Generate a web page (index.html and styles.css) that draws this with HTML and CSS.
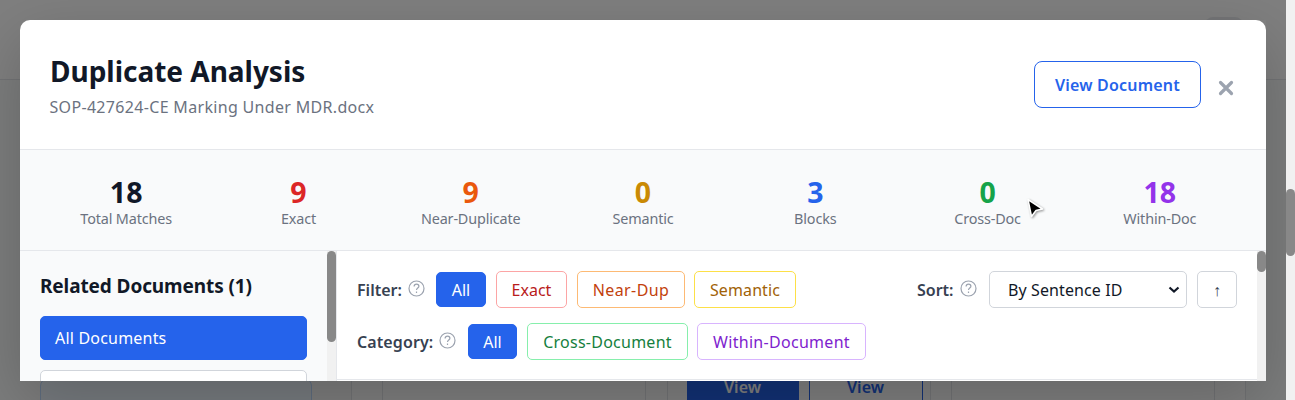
FILE: index.html
```html
<!DOCTYPE html>
<html lang="en">
<head>
<meta charset="utf-8">
<title>Duplicate Analysis</title>
<link rel="stylesheet" href="styles.css">
</head>
<body>
<div class="page">
  <div class="topbar"><span class="topbar-chip"></span></div>
  <div class="cards">
    <div class="side-panel"><div class="side-item"></div></div>
    <div class="grid-panel">
      <div class="card"></div>
      <div class="card card-actions"><span class="act solid">View</span><span class="act outline">View</span></div>
      <div class="card"></div>
    </div>
  </div>
</div>
<div class="overlay"></div>
<div class="page-scroll"><div class="thumb"></div></div>

<div class="modal">
  <header class="head">
    <div>
      <h1 class="title">Duplicate Analysis</h1>
      <div class="file">SOP-427624-CE Marking Under MDR.docx</div>
    </div>
    <div class="head-actions">
      <button class="view-doc"><span>View Document</span></button>
      <svg class="close" viewBox="0 0 16 16"><path d="M2.500 2.500L13.500 13.500M13.500 2.500L2.500 13.500"/></svg>
    </div>
  </header>
  <section class="stats">
    <div class="stat"><b class="c-dark">18</b><span>Total Matches</span></div>
    <div class="stat"><b class="c-red">9</b><span>Exact</span></div>
    <div class="stat"><b class="c-orange">9</b><span>Near-Duplicate</span></div>
    <div class="stat"><b class="c-yellow">0</b><span>Semantic</span></div>
    <div class="stat"><b class="c-blue">3</b><span>Blocks</span></div>
    <div class="stat"><b class="c-green">0</b><span>Cross-Doc</span></div>
    <div class="stat"><b class="c-purple">18</b><span>Within-Doc</span></div>
  </section>
  <div class="body">
    <aside class="sidebar">
      <h2 class="side-title">Related Documents (1)</h2>
      <div class="doc active">All Documents</div>
      <div class="doc"></div>
    </aside>
    <div class="scroll"><div class="thumb side-thumb"></div></div>
    <main class="main">
      <div class="row filter-row">
        <span class="label l-filter">Filter:</span>
        <svg class="help" viewBox="0 0 17 17"><circle cx="8.500" cy="8.500" r="7.500"/><path d="M6.100 6.500C6.200 5 7.200 4.200 8.500 4.200S10.900 5 10.900 6.300C10.900 8.100 8.500 8.100 8.500 10.100M8.500 11.600V12.900"/></svg>
        <button class="chip on f-all">All</button>
        <button class="chip red f-exact">Exact</button>
        <button class="chip orange f-near">Near-Dup</button>
        <button class="chip yellow f-sem">Semantic</button>
        <div class="sort">
          <span class="label l-sort">Sort:</span>
          <svg class="help" viewBox="0 0 17 17"><circle cx="8.500" cy="8.500" r="7.500"/><path d="M6.100 6.500C6.200 5 7.200 4.200 8.500 4.200S10.900 5 10.900 6.300C10.900 8.100 8.500 8.100 8.500 10.100M8.500 11.600V12.900"/></svg>
          <div class="select"><span>By Sentence ID</span><svg class="chev" viewBox="0 0 12 8"><path d="M1.500 1.500L6 5.500L10.500 1.500"/></svg></div>
          <button class="dir"><span>↑</span></button>
        </div>
      </div>
      <div class="row cat-row">
        <span class="label l-cat">Category:</span>
        <svg class="help" viewBox="0 0 17 17"><circle cx="8.500" cy="8.500" r="7.500"/><path d="M6.100 6.500C6.200 5 7.200 4.200 8.500 4.200S10.900 5 10.900 6.300C10.900 8.100 8.500 8.100 8.500 10.100M8.500 11.600V12.900"/></svg>
        <button class="chip on c-all">All</button>
        <button class="chip green c-cross">Cross-Document</button>
        <button class="chip purple c-within">Within-Document</button>
      </div>
    </main>
    <div class="scroll"><div class="thumb main-thumb"></div></div>
  </div>
</div>
<svg class="cursor" viewBox="0 0 20 22"><path d="M3 2.500L17.500 12L11 13.500L6.500 19.500Z"/></svg>
</body>
</html>
```

FILE: styles.css
```css
* { box-sizing: border-box; }
body { margin: 0; width: 1295px; height: 400px; overflow: hidden; position: relative; font-family: "Noto Sans", "Open Sans", sans-serif; color: #111827; }
button { font: inherit; background: #fff; padding: 0; white-space: nowrap; }

/* Page behind the dialog */
.page { width: 1286px; height: 400px; background: #f9fafb; display: flex; flex-direction: column; }
.topbar { flex: none; height: 80px; background: #fff; border-bottom: 1px solid #e5e7eb; display: flex; justify-content: flex-end; padding: 17px 43px 0 0; }
.topbar-chip { width: 38px; height: 38px; border-radius: 8px; background: #e9ebee; }
.cards { margin-top: 298px; height: 22px; padding-left: 20px; display: flex; }
.side-panel { width: 332px; padding: 0 20px; background: #fafafa; border-right: 1px solid #e5e7eb; }
.side-item { width: 272px; height: 60px; background: #eff6ff; border: 1px solid #bfdbfe; border-radius: 8px; }
.grid-panel { width: 894px; padding-left: 30px; display: flex; gap: 20.500px; background: #fff; border-right: 1px solid #e5e7eb; }
.card { width: 264px; flex: none; border: 1px solid #e5e7eb; border-width: 0 1px; }
.card-actions { display: flex; gap: 10px; padding: 0 0 0 19px; }
.act { width: 112px; height: 22px; flex: none; text-align: center; font-size: 16px; font-weight: 600; line-height: 18px; }
.solid { background: #2563eb; color: #fff; }
.outline { width: 114px; border: 1px solid #2563eb; border-width: 0 1px; color: #2563eb; }
.overlay { position: absolute; inset: 0; background: rgba(0,0,0,.5); }
.page-scroll { position: absolute; top: 0; right: 0; width: 9px; height: 400px; padding-top: 189px; background: #f1f1f1; }
.thumb { width: 9px; background: #888; border-radius: 5px; height: 67px; }

/* Dialog */
.modal { position: absolute; left: 20px; top: 20px; width: 1246px; height: 361px; background: #fff; border-radius: 10px 10px 0 0; display: flex; flex-direction: column; }
.overlay::after { content: ""; position: absolute; left: 20px; top: 20px; width: 1246px; height: 361px; box-shadow: 0 20px 60px rgba(0,0,0,.2); }
.modal > * { flex: none; }
.head { height: 130px; border-bottom: 1px solid #e5e7eb; display: flex; justify-content: space-between; padding: 31px 32px 0 30px; }
.title { margin: 0; font-size: 28px; line-height: 40px; font-weight: 700; letter-spacing: -.02px; white-space: nowrap; }
.file { font-size: 16px; line-height: 24px; margin-top: 4px; margin-left: -.5px; color: #6b7280; letter-spacing: .32px; white-space: nowrap; }
.head-actions { display: flex; gap: 17px; padding-top: 10px; }
.view-doc { width: 167px; height: 47px; border: 1px solid #2563eb; border-radius: 8px; color: #2563eb; font-size: 16px; font-weight: 600; letter-spacing: .2px; }
.close { width: 16px; height: 16px; margin-top: 19px; fill: none; stroke: #9ca3af; stroke-width: 3.200; stroke-linecap: round; }
.stats { height: 101px; padding: 26px 20px 0; background: #f9fafb; border-bottom: 1px solid #e5e7eb; display: grid; grid-template-columns: repeat(7, 1fr); }
.stat { display: flex; flex-direction: column; align-items: center; }
.stat b { font-size: 28.500px; line-height: 32px; font-weight: 700; }
.stat span { font-size: 14.400px; line-height: 22px; color: #6b7280; letter-spacing: -.15px; }
.c-dark { color: #111827; } .c-red { color: #dc2626; } .c-orange { color: #ea580c; } .c-yellow { color: #ca8a04; }
.c-blue { color: #2563eb; } .c-green { color: #16a34a; } .c-purple { color: #9333ea; }
.body { height: 130px; display: flex; overflow: hidden; }
.sidebar { width: 307px; padding: 20px 20px 0; background: #f9fafb; }
.side-title { margin: 0 0 16px; padding-top: 1px; font-size: 19px; line-height: 28px; font-weight: 700; letter-spacing: -.1px; white-space: nowrap; }
.doc { height: 44px; margin-bottom: 10px; border: 1px solid #d1d5db; border-radius: 5px; background: #fff; padding-left: 14px; font-size: 16px; line-height: 43px; letter-spacing: .2px; }
.doc.active { background: #2563eb; border-color: #2563eb; color: #fff; }
.scroll { width: 9px; background: #f1f1f1; }
.side-thumb { height: 91px; }
.main-thumb { height: 21px; }
.main { width: 921px; border-left: 1px solid #e5e7eb; padding: 20px 20px 0; }
.main::after { content: ""; display: block; height: 1px; margin: 19px -20px 0; background: #e5e7eb; }
.row { display: flex; align-items: center; height: 37px; }
.cat-row { margin-top: 15px; }
.label { font-size: 16px; font-weight: 600; color: #374151; white-space: nowrap; }
.l-filter { width: 51px; } .l-cat { width: 82px; letter-spacing: .1px; } .l-sort { width: 43px; }
.help { width: 17px; height: 17px; margin-top: -2px; flex: none; fill: none; stroke: #9ca3af; stroke-width: 1.200; }
.chip { height: 37px; border: 1px solid; border-radius: 5px; font-size: 16px; margin-left: 9px; flex: none; }
.on { height: 35px; background: #2563eb; border-color: #2563eb; color: #fff; margin-left: 11px; }
.red { color: #b91c1c; border-color: #fca5a5; } .orange { color: #c2410c; border-color: #fdba74; } .yellow { color: #a16207; border-color: #fde047; }
.green { color: #15803d; border-color: #86efac; } .purple { color: #7e22ce; border-color: #d8b4fe; }
.f-all { width: 50px; } .f-exact { width: 71px; margin-left: 10px; } .f-near { width: 108px; margin-left: 10px; letter-spacing: .4px; } .f-sem { width: 102px; letter-spacing: .1px; }
.c-all { width: 49px; margin-left: 12px; } .c-cross { width: 161px; margin-left: 10px; letter-spacing: .25px; } .c-within { width: 169px; letter-spacing: .3px; }
.sort { margin-left: auto; display: flex; align-items: center; }
.select { width: 198px; height: 37px; margin-left: 12px; border: 1px solid #d1d5db; border-radius: 5px; display: flex; align-items: center; justify-content: space-between; padding: 0 6px 0 18px; font-size: 16px; letter-spacing: .1px; color: #111827; }
.chev { width: 12px; height: 8px; fill: none; stroke: #111827; stroke-width: 2.200; }
.dir { width: 40px; height: 37px; margin-left: 10px; border: 1px solid #d1d5db; border-radius: 5px; font-size: 16px; color: #374151; }
.cursor { position: absolute; left: 1025px; top: 197px; width: 20px; height: 22px; fill: #000; stroke: #fff; stroke-width: 1.500; stroke-linejoin: round; filter: drop-shadow(1px 1px 1px rgba(0,0,0,.4)); }
```
